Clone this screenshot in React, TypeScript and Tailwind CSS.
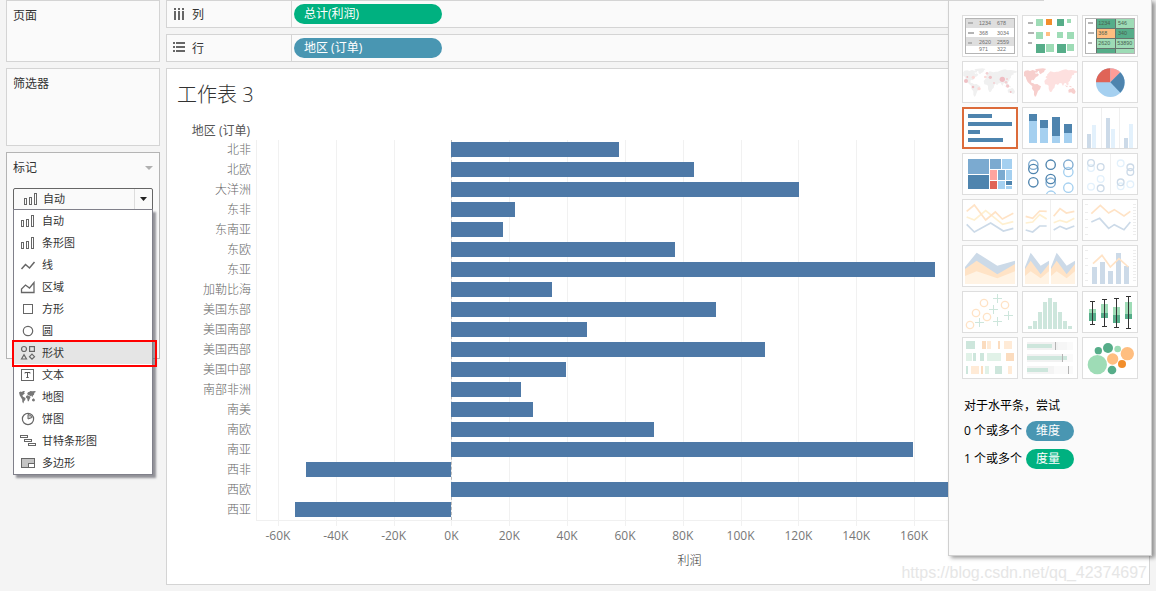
import type { ReactNode } from "react";

const UI = "font-['Open_Sans','Noto_Sans_CJK_SC',sans-serif]";

/* ---------- marks menu icons (16 x 16) ---------- */

const line = { fill: "none", stroke: "#666", strokeWidth: 1 };

function Icon({ children }: { children: ReactNode }) {
  return (
    <svg viewBox="0 0 16 16" className="size-4 shrink-0" aria-hidden="true">
      {children}
    </svg>
  );
}

const BarsIcon = () => (
  <Icon>
    <g {...line}>
      <rect x="1.5" y="7.5" width="2" height="6" />
      <rect x="6.5" y="6.5" width="2" height="7" />
      <rect x="11.5" y="2.5" width="2" height="11" />
    </g>
  </Icon>
);

const WorldGlyph = () => (
  <svg viewBox="0 0 18 16" className="-ml-0.5 h-4 w-[18px] shrink-0" aria-hidden="true">
    <path
      fill="#777"
      d="M1 3.500l1.500-1 1.500.5 1-1 2 .2L6 4l1 .3L5.500 5.500 4.300 6.800l.8 1L7.600 9 7.200 11 6 12.200 5.400 14.500 4.300 13 4.200 10.500 3 8.500 1.800 6.500zM9.200 4.600L10 3.200l1.500-.4.8-.9 2 .3L17.300 2l.4 1-1.300.8-.4 2-1 .7-.6 1.700-1.200-1.600-1 .9-.8-1.300-1.700-.4zM8.200 7l1.400-.7 1.900.6 1 1.600-.9 1.400-.8 2.300-1 .1-.6-2.900-1.300-.8zM14 10.500l1.500-1.200 1.200 1 .2 1.500-1 .8-1.700-.7z"
    />
  </svg>
);

const MARKS: { name: string; icon: ReactNode }[] = [
  { name: "自动", icon: <BarsIcon /> },
  { name: "条形图", icon: <BarsIcon /> },
  { name: "线", icon: <Icon><path {...line} strokeWidth={1.5} d="M1.500 12l4-4.500 4 3.500 5-6" /></Icon> },
  { name: "区域", icon: <Icon><path {...line} strokeWidth={1.3} d="M1.500 13.500v-3.500l4-4 4 3 4.500-5.500v10z" /></Icon> },
  { name: "方形", icon: <Icon><rect {...line} x="3.500" y="3.500" width="9" height="9" /></Icon> },
  { name: "圆", icon: <Icon><circle {...line} strokeWidth={1.2} cx="8" cy="8" r="4.700" /></Icon> },
  {
    name: "形状",
    icon: (
      <Icon>
        <g {...line} strokeWidth={1.2}>
          <circle cx="4" cy="4" r="2.500" />
          <rect x="9.600" y="1.600" width="4.800" height="4.800" />
          <path d="M1.500 14L4 9.600 6.500 14z" />
          <path d="M12 9.200l2.500 2.500L12 14.200 9.500 11.700z" />
        </g>
      </Icon>
    ),
  },
  {
    name: "文本",
    icon: (
      <Icon>
        <rect {...line} x="1.500" y="2.500" width="12" height="11" />
        <path fill="none" stroke="#555" d="M5 6.500V5.500h5v1M7.500 5.500v5M6.300 10.500h2.400" />
      </Icon>
    ),
  },
  { name: "地图", icon: <WorldGlyph /> },
  {
    name: "饼图",
    icon: (
      <Icon>
        <circle {...line} strokeWidth={1.2} cx="8" cy="8" r="5.600" />
        <path fill="#ccc" stroke="#666" d="M8 8V3.500a4.500 4.500 0 0 1 4 3z" />
      </Icon>
    ),
  },
  {
    name: "甘特条形图",
    icon: (
      <Icon>
        <g {...line}>
          <rect x=".5" y="2.500" width="7" height="2" />
          <rect x="4.500" y="6.500" width="7" height="2" />
          <rect x="8.500" y="10.500" width="7" height="2" />
        </g>
      </Icon>
    ),
  },
  {
    name: "多边形",
    icon: (
      <Icon>
        <rect x="1.500" y="3.500" width="13" height="9" fill="#c4c4c4" stroke="#666" />
        <rect x="8.500" y="8.500" width="6" height="4" fill="#fff" stroke="#666" />
      </Icon>
    ),
  },
];

/* ---------- worksheet data, profit in thousands ---------- */

const REGIONS: [string, number][] = [
  ["北非", 58.1],
  ["北欧", 84],
  ["大洋洲", 120.2],
  ["东非", 22.1],
  ["东南亚", 18],
  ["东欧", 77.4],
  ["东亚", 167.3],
  ["加勒比海", 34.9],
  ["美国东部", 91.6],
  ["美国南部", 47],
  ["美国西部", 108.5],
  ["美国中部", 39.7],
  ["南部非洲", 24.2],
  ["南美", 28.3],
  ["南欧", 70.1],
  ["南亚", 159.7],
  ["西非", -50.4],
  ["西欧", 180],
  ["西亚", -54.2],
];

const TICKS = [-60, -40, -20, 0, 20, 40, 60, 80, 100, 120, 140, 160];
const MIN = -67.6;
const MAX = 237.1;
const pos = (v: number) => `${((v - MIN) / (MAX - MIN)) * 100}%`;
const span = (v: number) => `${(Math.abs(v) / (MAX - MIN)) * 100}%`;

/* ---------- chart type thumbnails ---------- */

type R = [number, number, number, number, string];
const Rects = ({ items }: { items: R[] }) => (
  <g shapeRendering="crispEdges">
    {items.map(([x, y, w, h, c], i) => (
      <rect key={i} x={x} y={y} width={w} height={h} fill={c} />
    ))}
  </g>
);

type C = [number, number, number, string];
const Rings = ({ items, width = 4 }: { items: C[]; width?: number }) => (
  <g fill="none" strokeWidth={width}>
    {items.map(([x, y, r, c], i) => (
      <circle key={i} cx={x} cy={y} r={r} stroke={c} />
    ))}
  </g>
);
const Dots = ({ items }: { items: C[] }) => (
  <g>
    {items.map(([x, y, r, c], i) => (
      <circle key={i} cx={x} cy={y} r={r} fill={c} />
    ))}
  </g>
);

const Lines = ({ items }: { items: [string, string][] }) => (
  <g fill="none" strokeWidth="5">
    {items.map(([p, c], i) => (
      <polyline key={i} points={p} stroke={c} />
    ))}
  </g>
);

const Cells = ({ items, fill }: { items: [number, number, string][]; fill: string }) => (
  <g fill={fill} fontSize="16" fontFamily="Liberation Sans, sans-serif">
    {items.map(([x, y, t]) => (
      <text key={t} x={x} y={y}>
        {t}
      </text>
    ))}
  </g>
);

const World = ({ west, east }: { west: string; east: string }) => (
  <g>
    <path
      fill={west}
      d="M252 217l3-5 9-1 6 2 8-3 7 2 5-1 4 3-3 4-5-1 1 5 5-2 5 4-4 5-5 2-4 5-3 5-4-2-4 3 1 6 6 2 4 3 8-1 5 4 6 3-3 9-6 5-3 8-3 8-3 1-3-6 0-10-6-8 1-7-7-6-7-7-4-8-2-8-5-2zM285 208l10-2 14-1 10 2-5 4-2 5-6 3-4 4-4-4-1-6-7-1z"
    />
    <path
      fill={east}
      d="M313 243l5-6 7-3 5 3 9 0 5 8 5 3-4 8-2 8-4 3-4 8-5 1-4-9 0-10-4-3-7-1zM317 233l1-4 4-1-1-4 5-5 5-5 6 1 5 2 7-2 6 0 7-3 8-3 8-1 7 3 10-1 12 2 7 3-4 3-7 1-1 6-3-1-4 4 0 5-4 4-1 5-5 5 1 6-5 4-3-8-5 1-4 8-5-9-6 1-4 5-6-3-4-7-7 0-5-5-5 1z"
    />
    <path fill={west} d="M385 270l5-4 5 0 2-2 4 1 4 6 2 4-3 6-5 0-5-4-8 1zM374 256l5 1 5 3-3 2zM386 257l7 2 3 3-6-1z" />
  </g>
);

const D = "#4e84ae";
const L = "#a5d0f0";
const MID = "#7baad0";
const FB = "#ccdae8";
const FL = "#e3f1fc";
const G = "#56ad89";
const LG = "#9edcb6";
const FG = "#cde6dc";
const PG = "#e1f2e8";
const O = "#ffbe80";
const DO = "#f28e2b";
const FO = "#ffe3c6";
const PO = "#fff3e4";
const FP = "#fbdcbf";
const FQ = "#ffebd7";
const K = "#efefef";
const GR = "#b4b4b4";

const ticks = (x: number, w: number, n: number, from: number, to: number): R[] =>
  Array.from({ length: n }, (_, i) => [x, Math.round(from + ((to - from) * i) / (n - 1)), w, 3, "#ededed"] as R);

const CHARTS: { name: string; box: string; art: ReactNode; selected?: boolean }[] = [
  {
    name: "文本表",
    box: "69 48 162 120",
    art: (
      <>
        <rect x="76.500" y="55.500" width="147" height="105" fill="#fff" stroke="#b4b4b4" strokeWidth="3" />
        <Rects items={[[78, 57, 144, 27, "#dedede"], [78, 111, 144, 27, "#dedede"], [84, 66, 15, 6, GR], [84, 96, 18, 6, GR], [84, 126, 12, 6, GR]]} />
        <Cells fill="#6f6f6f" items={[[117, 76, "1234"], [171, 76, "678"], [117, 104, "368"], [171, 104, "3034"], [117, 131, "2620"], [171, 131, "2559"], [117, 154, "971"], [171, 154, "322"]]} />
      </>
    ),
  },
  {
    name: "热图",
    box: "249 48 162 120",
    art: (
      <Rects
        items={[
          [264, 66, 15, 6, GR], [264, 96, 18, 6, GR], [264, 126, 12, 6, GR],
          [288, 57, 21, 21, LG], [318, 57, 18, 18, DO], [351, 57, 21, 21, G], [381, 57, 12, 12, LG],
          [288, 96, 21, 21, LG], [318, 96, 12, 12, O], [351, 96, 18, 18, LG], [381, 96, 21, 21, LG],
          [288, 132, 27, 27, G], [318, 132, 24, 24, LG], [351, 132, 27, 27, G], [381, 132, 21, 21, LG],
        ]}
      />
    ),
  },
  {
    name: "突出显示表",
    box: "429 48 162 120",
    art: (
      <>
        <rect x="436.500" y="55.500" width="147" height="105" fill="#fff" stroke="#b4b4b4" strokeWidth="3" />
        <Rects
          items={[
            [468, 57, 114, 102, "#66756d"],
            [471, 57, 54, 27, G], [528, 57, 54, 27, LG],
            [471, 87, 54, 27, O], [528, 87, 54, 27, G],
            [471, 117, 54, 27, LG], [528, 117, 54, 27, LG],
            [471, 147, 54, 12, G], [528, 147, 54, 12, LG],
            [444, 66, 15, 6, GR], [444, 96, 18, 6, GR], [444, 126, 12, 6, GR],
          ]}
        />
        <Cells fill="#48614f" items={[[475, 75, "1234"], [534, 75, "546"], [475, 106, "368"], [534, 106, "340"], [475, 136, "2620"], [532, 136, "53890"]]} />
      </>
    ),
  },
  {
    name: "符号地图",
    box: "69 186 162 120",
    art: (
      <>
        <g transform="translate(-182 0)">
          <World west="#f0f0f0" east="#f0f0f0" />
        </g>
        <Dots
          items={[
            [78, 243, 6, "#efc0c4"], [82, 231, 3, "#efc0c4"], [100, 232, 5, "#fbdad8"], [99, 261, 4, "#efc0c4"], [117, 266, 5, "#fbdad8"],
            [141, 220, 4, "#f3cfd2"], [136, 231, 4, "#fbdad8"], [151, 232, 5, "#efc0c4"], [162, 249, 3, "#f3cfd2"],
            [187, 238, 8, "#efbcc2"], [198, 247, 4, "#f3cfd2"], [203, 258, 5, "#f3c9cc"], [201, 237, 3, "#f3cfd2"], [212, 276, 3, "#efc0c4"],
          ]}
        />
      </>
    ),
  },
  { name: "地图", box: "249 186 162 120", art: <World west="#f7cfcd" east="#fde0df" /> },
  {
    name: "饼图",
    box: "429 186 162 120",
    art: (
      <>
        <circle cx="511" cy="248" r="43" fill={L} />
        <path d="M511 247V205a43 43 0 0 0-43 42z" fill="#e06457" />
        <path d="M511 247V205a43 43 0 0 1 30 12z" fill="#ff9d98" />
        <path d="M511 247l30-30a43 43 0 0 1 0 61z" fill={D} />
      </>
    ),
  },
  {
    name: "水平条",
    box: "72 27 156 114",
    selected: true,
    art: <Rects items={[[84, 42, 72, 12, D], [84, 66, 132, 12, D], [84, 90, 36, 12, D], [84, 114, 105, 12, D]]} />,
  },
  {
    name: "堆叠条",
    box: "249 24 162 120",
    art: (
      <Rects
        items={[
          [267, 42, 24, 21, D], [267, 63, 24, 66, L],
          [300, 60, 24, 24, D], [300, 84, 24, 45, L],
          [336, 51, 24, 57, D], [336, 108, 24, 21, L],
          [372, 72, 24, 27, D], [372, 99, 24, 30, L],
        ]}
      />
    ),
  },
  {
    name: "并排条",
    box: "429 24 162 120",
    art: (
      <Rects
        items={[
          [483, 24, 3, 120, K], [537, 24, 3, 120, K],
          [441, 102, 12, 42, FB], [456, 75, 12, 69, FL],
          [498, 54, 12, 90, FB], [513, 87, 12, 57, FL],
          [552, 114, 12, 30, FB], [567, 72, 12, 72, FL],
        ]}
      />
    ),
  },
  {
    name: "树状图",
    box: "69 162 162 120",
    art: (
      <Rects
        items={[
          [84, 177, 63, 45, MID], [84, 225, 63, 42, D],
          [150, 177, 33, 30, MID], [186, 177, 30, 30, L],
          [150, 210, 21, 30, "#ffa49f"], [174, 210, 21, 30, MID], [198, 210, 18, 30, L],
          [150, 243, 21, 24, "#e06457"], [174, 243, 21, 24, L], [198, 243, 18, 12, D], [198, 258, 18, 9, L],
        ]}
      />
    ),
  },
  {
    name: "圆视图",
    box: "249 162 162 120",
    art: (
      <Rings
        items={[
          [280, 194, 14, "#7fabd0"], [280, 207, 14, D], [280, 247, 14, D],
          [332, 194, 14, D], [332, 248, 14, "#7fabd0"], [332, 237, 14, D], [333, 287, 14, L],
          [385, 216, 14, L], [385, 194, 14, "#7fabd0"], [385, 263, 14, L],
        ]}
      />
    ),
  },
  {
    name: "并排圆",
    box: "429 162 162 120",
    art: (
      <>
        <Rects items={[[510, 162, 3, 120, K]]} />
        <Rings
          items={[
            [453, 204, 10, FL], [453, 189, 10, FB], [453, 260, 10, FL], [482, 201, 10, FB], [482, 237, 10, FL], [482, 265, 10, FB],
            [542, 190, 10, FL], [542, 259, 10, FL], [542, 247, 10, FB], [571, 216, 10, FB], [571, 202, 10, FB], [571, 253, 10, FL],
          ]}
        />
      </>
    ),
  },
  {
    name: "线(连续)",
    box: "69 15 162 120",
    art: (
      <Lines
        items={[
          ["80,66 103,75 137,47 188,88 220,80", "#fff0d0"],
          ["80,49 103,30 137,75 166,51 187,72 220,55", FO],
          ["80,88 103,111 152,84 190,108 220,100", FB],
        ]}
      />
    ),
  },
  {
    name: "线(离散)",
    box: "249 15 162 120",
    art: (
      <>
        <Rects items={[[330, 15, 3, 120, K]]} />
        <Lines
          items={[
            ["257,84 278,81 299,59 320,72", "#fff0d0"], ["341,83 360,76 380,82 403,70", "#fff0d0"],
            ["257,64 278,70 299,48 320,49", FO], ["341,64 360,41 379,54 403,49", FO],
            ["257,105 278,111 299,93 320,93", FB], ["341,105 360,94 379,102 403,93", FB],
          ]}
        />
      </>
    ),
  },
  {
    name: "双线",
    box: "429 15 162 120",
    art: (
      <>
        <Rects items={[...ticks(435, 9, 5, 27, 117), ...ticks(579, 9, 11, 27, 117)]} />
        <Lines items={[["454,56 481,31 506,54 523,44 552,63 571,49", FO], ["454,81 479,70 506,100 523,89 552,104 571,81", FB]]} />
      </>
    ),
  },
  {
    name: "面积图(连续)",
    box: "69 153 162 120",
    art: (
      <>
        <path fill={FB} d="M75 216l35-43 62 39 53-15v70H75z" />
        <path fill={FO} d="M75 222l35-25 62 41 53-31v60H75z" />
        <path fill={PO} d="M75 243l35-14 62 21 53-21v38H75z" />
      </>
    ),
  },
  {
    name: "面积图(离散)",
    box: "249 153 162 120",
    art: (
      <>
        {[0, 78].map((x) => (
          <g key={x} transform={`translate(${x} 0)`}>
            <path fill={FB} d="M255 216l17-43 30 39 25-15v70h-72z" />
            <path fill={FO} d="M255 222l17-25 30 41 25-31v60h-72z" />
            <path fill={PO} d="M255 243l17-14 30 21 25-21v38h-72z" />
          </g>
        ))}
      </>
    ),
  },
  {
    name: "双组合",
    box: "429 153 162 120",
    art: (
      <>
        <Rects
          items={[
            ...ticks(435, 9, 5, 165, 255), ...ticks(579, 9, 11, 165, 255),
            [456, 216, 15, 51, FB], [480, 201, 15, 66, FB], [504, 228, 15, 39, FB], [528, 174, 15, 93, FB], [552, 213, 15, 54, FB],
          ]}
        />
        <Lines items={[["459,206 486,181 511,216 537,191 565,216", FO]]} />
      </>
    ),
  },
  {
    name: "散点图",
    box: "69 21 162 120",
    art: (
      <>
        <Rings items={[[90, 120, 11, FO], [108, 84, 11, FO], [132, 54, 11, FO], [141, 96, 11, FO], [195, 60, 11, FO]]} />
        <path
          fill="none"
          stroke={FG}
          strokeWidth="3"
          d="M159 40.500h27M172.500 27v27M147 73.500h27M160.500 60v27M105 112.500h27M118.500 99v27M159 109.500h27M172.500 96v27M192 91.500h27M205.500 78v27"
        />
      </>
    ),
  },
  {
    name: "直方图",
    box: "249 21 162 120",
    art: (
      <Rects
        items={[
          [264, 123, 12, 9, FG], [279, 108, 12, 24, FG], [294, 81, 12, 51, FG], [309, 51, 12, 81, FG], [324, 39, 12, 93, FG],
          [339, 51, 12, 81, FG], [354, 81, 12, 51, FG], [369, 108, 12, 24, FG], [384, 123, 12, 9, FG],
        ]}
      />
    ),
  },
  {
    name: "盒须图",
    box: "429 21 162 120",
    art: (
      <Rects
        items={[
          [447, 72, 21, 12, LG], [447, 84, 21, 24, G], [456, 48, 3, 72, "#333"], [450, 48, 15, 3, "#333"], [450, 117, 15, 3, "#333"],
          [483, 57, 21, 27, LG], [483, 84, 21, 15, G], [492, 42, 3, 84, "#333"], [486, 42, 15, 3, "#333"], [486, 123, 15, 3, "#333"],
          [519, 66, 21, 24, LG], [519, 90, 21, 24, G], [528, 39, 3, 90, "#333"], [522, 39, 15, 3, "#333"], [522, 126, 15, 3, "#333"],
          [555, 51, 21, 36, LG], [555, 87, 21, 15, G], [564, 33, 3, 99, "#333"], [558, 33, 15, 3, "#333"], [558, 129, 15, 3, "#333"],
        ]}
      />
    ),
  },
  {
    name: "甘特图",
    box: "69 159 162 120",
    art: (
      <Rects
        items={[
          [78, 168, 27, 24, FG], [126, 168, 12, 24, FP], [141, 168, 12, 24, FQ], [174, 168, 6, 24, FP], [192, 168, 24, 24, FQ],
          [78, 204, 18, 24, PG], [99, 204, 9, 24, FG], [120, 204, 12, 24, FG], [141, 204, 42, 24, PG], [198, 204, 24, 24, FP],
          [78, 243, 6, 24, FG], [93, 243, 24, 24, FQ], [123, 243, 6, 24, FP], [135, 243, 12, 24, PG], [165, 243, 21, 24, FG], [204, 243, 12, 24, FQ],
        ]}
      />
    ),
  },
  {
    name: "标靶图",
    box: "249 159 162 120",
    art: (
      <Rects
        items={[
          [261, 171, 138, 24, "#fafafa"], [261, 171, 120, 24, "#f6f6f6"], [261, 171, 93, 24, "#f2f2f2"], [261, 177, 75, 12, FG], [345, 171, 3, 24, GR],
          [261, 207, 138, 24, "#fafafa"], [261, 207, 105, 24, "#f2f2f2"], [261, 213, 120, 12, FG], [366, 207, 3, 24, GR],
          [261, 243, 138, 24, "#fafafa"], [261, 243, 81, 24, "#f4f4f4"], [261, 249, 63, 12, FG], [384, 243, 3, 24, GR],
        ]}
      />
    ),
  },
  {
    name: "填充气泡图",
    box: "429 159 162 120",
    art: (
      <Dots
        items={[
          [472, 239, 29, LG], [475, 197, 11, G], [504, 189, 15, G], [533, 192, 10, LG],
          [562, 206, 20, O], [518, 222, 17, O], [546, 237, 12, DO], [516, 255, 13, G],
        ]}
      />
    ),
  },
];

/* ---------- page parts ---------- */

function Shelf({ label, icon, pill, color }: { label: string; icon: ReactNode; pill: string; color: string }) {
  return (
    <section className="flex h-7 items-stretch border border-[#d4d4d4] bg-[#fafafa]">
      <h2 className="flex w-[125px] items-center gap-1.5 border-r border-[#d4d4d4] pt-px pl-1.5">
        {icon}
        {label}
      </h2>
      <div className="flex items-center pl-0.5">
        <button className={`h-5 w-[148px] rounded-full px-2.5 text-left leading-4 text-white ${color}`}>{pill}</button>
      </div>
    </section>
  );
}

function Worksheet() {
  return (
    <section className="relative flex-1 border border-[#d4d4d4] bg-white pt-3 pr-3 font-light">
      <h1 className="pl-2.5 text-[20px] leading-7 text-[#333]">工作表 3</h1>
      <div className="mt-[13px] flex h-[18px] w-[89px] items-center justify-end pr-1.5 font-normal whitespace-nowrap text-[#555]">
        地区 (订单)
      </div>
      <div className="flex">
        <ul className="w-[89px] shrink-0 pr-[5px] text-right text-[#666]">
          {REGIONS.map(([name]) => (
            <li key={name} className="h-5 leading-5">
              {name}
            </li>
          ))}
        </ul>
        <div className="min-w-0 flex-1">
          <div className="relative border-b border-[#f0f0f0]">
            {TICKS.map((t) => (
              <span key={t} className="absolute top-0 -bottom-1.5 w-px bg-[#f1f1f1]" style={{ left: pos(t) }} />
            ))}
            <span className="absolute inset-y-0 left-0 w-px bg-[#f0f0f0]" />
            <span className="absolute inset-y-0 border-l border-dashed border-[#bbb]" style={{ left: pos(0) }} />
            {REGIONS.map(([name, v]) => (
              <div key={name} className="relative h-5 pt-0.5">
                <div
                  className="relative h-[15px] bg-[#4e79a7]"
                  style={{ marginLeft: pos(Math.min(v, 0)), width: span(v) }}
                />
              </div>
            ))}
          </div>
          <div className="relative mt-[7px] h-4 font-normal leading-4 text-[#777]">
            {TICKS.map((t) => (
              <span key={t} className="absolute -translate-x-1/2" style={{ left: pos(t) }}>
                {t}K
              </span>
            ))}
          </div>
          <div className="mt-[9px] pr-[14px] text-center leading-4 text-[#333]">利润</div>
        </div>
      </div>
      <span className="absolute right-0.5 bottom-[3px] font-['Liberation_Sans',sans-serif] text-[16px] leading-4 font-normal text-[#e6e6e6]">
        https://blog.csdn.net/qq_42374697
      </span>
    </section>
  );
}

function ShowMe() {
  return (
    <aside className="absolute top-0 right-1 w-[204px] border border-t-0 border-[#d0d0d0] bg-[#fafafa] pb-[86px] text-black shadow-[3px_2px_4px_rgba(0,0,0,0.4)]">
      <div className="h-px w-[95px] bg-[#d4d4d4]" />
      <div className="mt-3.5 ml-[13px] grid w-[176px] grid-cols-3 gap-1">
        {CHARTS.map((c) => (
          <button
            key={c.name}
            aria-label={c.name}
            className={`h-[42px] bg-white ${c.selected ? "border-2 border-[#dc6b3a]" : "border border-[#dedede]"}`}
          >
            <svg viewBox={c.box} className="block size-full" aria-hidden="true">
              {c.art}
            </svg>
          </button>
        ))}
      </div>
      <div className="mt-[19px] ml-[15px]">
        <p className="leading-4">对于水平条，尝试</p>
        <p className="mt-[7px] flex h-5 items-center gap-1">
          0 个或多个
          <span className="w-12 rounded-full bg-[#4996b2] px-2.5 leading-5 text-white">维度</span>
        </p>
        <p className="mt-2 flex h-5 items-center gap-1">
          1 个或多个
          <span className="w-12 rounded-full bg-[#00b180] px-2.5 leading-5 text-white">度量</span>
        </p>
      </div>
    </aside>
  );
}

function MarksCard() {
  return (
    <section className="h-[207px] border border-[#b4b4b4] bg-[#fafafa] px-1.5 pt-[7px]">
      <h2 className="flex items-center justify-between leading-4">
        <label htmlFor="mark">标记</label>
        <svg viewBox="0 0 8 4" className="h-1 w-2" aria-hidden="true">
          <path d="M0 0h8L4 4z" fill="#b0b0b0" />
        </svg>
      </h2>
      <div className="relative mt-3 text-[11px]">
        <span className="pointer-events-none absolute top-[3px] left-2.5">
          <BarsIcon />
        </span>
        <select
          id="mark"
          className="block h-[22px] w-full appearance-none rounded-t-xs border border-[#666] bg-[#fafafa] pl-[29px] text-[#333]"
        >
          {MARKS.map((m) => (
            <option key={m.name}>{m.name}</option>
          ))}
        </select>
        <span className="pointer-events-none absolute inset-y-px right-px flex w-[18px] items-center justify-center border-l border-[#ddd]">
          <svg viewBox="0 0 7 4" className="h-1 w-[7px]" aria-hidden="true">
            <path d="M0 0h7L3.500 4z" fill="#222" />
          </svg>
        </span>
        <ul className="absolute inset-x-0 top-[21px] z-10 border border-[#80808a] bg-white shadow-[3px_3px_2px_rgba(80,80,90,0.6)]">
          {MARKS.map((m) => (
            <li key={m.name} className="relative">
              <button
                className={`flex h-[22px] w-full items-center gap-1.5 pl-1.5 text-left text-[#333] ${m.name === "形状" ? "bg-[#e5e5e5]" : ""}`}
              >
                {m.icon}
                {m.name}
              </button>
              {m.name === "形状" && (
                <span className="pointer-events-none absolute -top-0.5 -right-[5px] -bottom-[3px] -left-0.5 border-2 border-[#f00]" />
              )}
            </li>
          ))}
        </ul>
      </div>
    </section>
  );
}

export default function App() {
  return (
    <div className={`relative flex min-h-screen gap-1.5 overflow-hidden bg-[#f4f4f4] px-1.5 pb-1.5 text-[12px] text-[#333] ${UI}`}>
      <aside className="flex w-[154px] shrink-0 flex-col gap-1.5">
        <section className="h-[62px] border border-[#d4d4d4] bg-[#fafafa] px-1.5 pt-[7px]">
          <h2 className="leading-4">页面</h2>
        </section>
        <section className="h-[78px] border border-[#d4d4d4] bg-[#fafafa] px-1.5 pt-[7px]">
          <h2 className="leading-4">筛选器</h2>
        </section>
        <MarksCard />
      </aside>
      <main className="flex min-w-0 flex-1 flex-col gap-1.5">
        <Shelf
          label="列"
          pill="总计(利润)"
          color="bg-[#00b180]"
          icon={
            <svg viewBox="0 0 13 13" className="size-[13px]" fill="#666" shapeRendering="crispEdges" aria-hidden="true">
              <path d="M1 0h2v2H1zM5 0h2v2H5zM9 0h2v2H9zM1 3h2v9H1zM5 3h2v9H5zM9 3h2v9H9z" />
            </svg>
          }
        />
        <Shelf
          label="行"
          pill="地区 (订单)"
          color="bg-[#4996b2]"
          icon={
            <svg viewBox="0 0 13 13" className="size-[13px]" fill="#666" shapeRendering="crispEdges" aria-hidden="true">
              <path d="M0 0h2v2H0zM0 4h2v2H0zM0 8h2v2H0zM3 0h9v2H3zM3 4h9v2H3zM3 8h9v2H3z" />
            </svg>
          }
        />
        <Worksheet />
      </main>
      <ShowMe />
    </div>
  );
}
